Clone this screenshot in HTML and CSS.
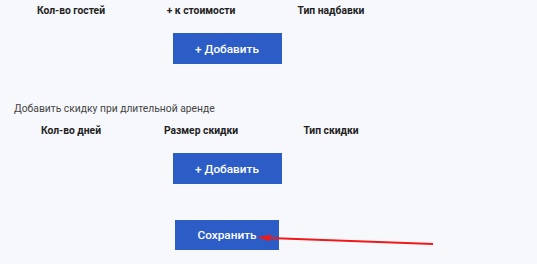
FILE: index.html
```html
<!DOCTYPE html>
<html lang="ru">
<head>
<meta charset="utf-8">
<link rel="stylesheet" href="styles.css">
</head>
<body>
<div class="page">
  <section class="block">
    <div class="cols">
      <div class="col">Кол-во гостей</div>
      <div class="col">+ к стоимости</div>
      <div class="col">Тип надбавки</div>
    </div>
    <div class="actions"><button class="btn btn-add">+ Добавить</button></div>
  </section>

  <section class="block block-discount">
    <p class="label">Добавить скидку при длительной аренде</p>
    <div class="cols">
      <div class="col">Кол-во дней</div>
      <div class="col">Размер скидки</div>
      <div class="col">Тип скидки</div>
    </div>
    <div class="actions"><button class="btn btn-add">+ Добавить</button></div>
  </section>

  <div class="actions save-row">
    <button class="btn btn-save">Сохранить</button>
    <svg class="arrow" width="200" height="20" viewBox="0 0 200 20">
      <line x1="12" y1="8" x2="176" y2="14" stroke="#f01818" stroke-width="2"/>
      <polygon points="0,7.5 14,4.5 13,11" fill="#f01818"/>
    </svg>
  </div>
</div>
</body>
</html>
```
FILE: styles.css
```css
html, body {
  margin: 0;
  padding: 0;
  background: #f7f8fc;
}
body {
  font-family: Roboto, "Noto Sans", sans-serif;
  color: #222;
  width: 537px;
  height: 264px;
  overflow: hidden;
}
.page {
  width: 442px;
  padding-left: 6px;
}
.block {
  padding-top: 3px;
}
.cols {
  display: grid;
  grid-template-columns: 130px 130px 130px;
  height: 15px;
  align-items: center;
}
.col {
  text-align: center;
  font-size: 10.3px;
  font-weight: 700;
  color: #222;
}
.actions {
  display: flex;
  justify-content: center;
  position: relative;
}
.block .actions {
  margin-top: 15px;
}
.btn {
  border: 0;
  background: #2c5dc6;
  color: #fff;
  font-family: Roboto, "Noto Sans", sans-serif;
  font-size: 11.8px;
  font-weight: 500;
  padding: 0;
  cursor: pointer;
}
.btn-add {
  width: 109px;
  height: 31px;
}
.block-discount {
  padding-top: 37px;
}
.label {
  margin: 0 0 7px 8px;
  font-size: 10.3px;
  color: #444;
  line-height: 15px;
}
.save-row {
  margin-top: 36px;
}
.btn-save {
  width: 104px;
  height: 30px;
}
.arrow {
  position: absolute;
  left: 251px;
  top: 10px;
}
```
